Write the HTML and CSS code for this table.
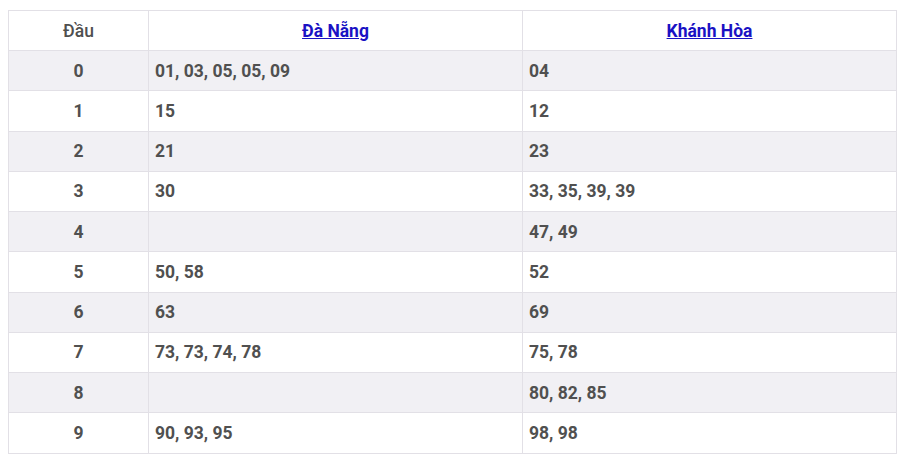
FILE: index.html
```html
<!DOCTYPE html>
<html>
<head>
<meta charset="utf-8">
<link rel="stylesheet" href="styles.css">
</head>
<body>
<table class="loto">
  <colgroup><col class="c-head"><col class="c-prov"><col class="c-prov"></colgroup>
  <thead>
    <tr><th class="dau">Đầu</th><th><a href="#">Đà Nẵng</a></th><th><a href="#">Khánh Hòa</a></th></tr>
  </thead>
  <tbody>
    <tr><td class="num">0</td><td>01, 03, 05, 05, 09</td><td>04</td></tr>
    <tr><td class="num">1</td><td>15</td><td>12</td></tr>
    <tr><td class="num">2</td><td>21</td><td>23</td></tr>
    <tr><td class="num">3</td><td>30</td><td>33, 35, 39, 39</td></tr>
    <tr><td class="num">4</td><td></td><td>47, 49</td></tr>
    <tr><td class="num">5</td><td>50, 58</td><td>52</td></tr>
    <tr><td class="num">6</td><td>63</td><td>69</td></tr>
    <tr><td class="num">7</td><td>73, 73, 74, 78</td><td>75, 78</td></tr>
    <tr><td class="num">8</td><td></td><td>80, 82, 85</td></tr>
    <tr><td class="num">9</td><td>90, 93, 95</td><td>98, 98</td></tr>
  </tbody>
</table>
</body>
</html>
```
FILE: styles.css
```css
html, body { margin: 0; padding: 0; background: #fff; }
body { padding: 10px 0 0 8px; }
.loto {
  width: 888px;
  border-collapse: collapse;
  table-layout: fixed;
  font-family: Roboto, "Noto Sans", sans-serif;
  font-size: 17.5px;
  color: #505050;
}
.c-head { width: 140px; }
.c-prov { width: 374px; }
.loto th, .loto td {
  height: 40.25px;
  padding: 0 6px;
  border: 1px solid #e2e0e6;
  box-sizing: border-box;
  line-height: 20px;
}
.loto th { height: 40px; font-weight: 700; text-align: center; }
.loto th.dau { font-weight: 500; color: #4f4f4f; }
.loto th a { color: #1a12c4; text-decoration: underline; }
.loto td { font-weight: 700; text-align: left; }
.loto td.num { text-align: center; }
.loto tbody tr:nth-child(odd) td { background: #f1f0f4; }
```
